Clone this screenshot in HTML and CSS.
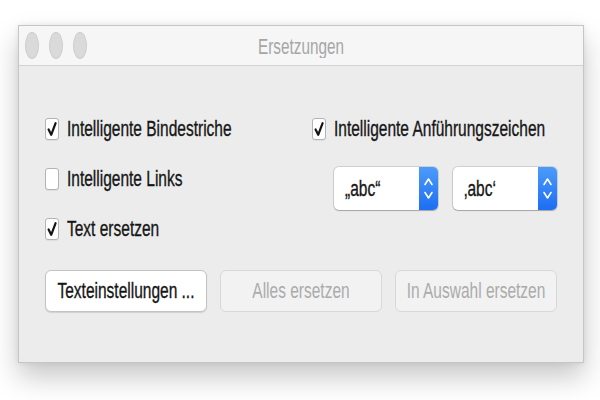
FILE: index.html
```html
<!DOCTYPE html>
<html lang="de">
<head>
<meta charset="utf-8">
<title>Ersetzungen</title>
<link rel="stylesheet" href="styles.css">
</head>
<body>
<div class="stage">
  <div class="window">
    <div class="titlebar">
      <div class="lights">
        <span class="light"></span><span class="light"></span><span class="light"></span>
      </div>
      <div class="title"><span class="tt">Ersetzungen</span></div>
    </div>
    <div class="content">
      <div class="options">
        <div class="col left">
          <label class="check">
            <span class="box"><svg width="14" height="22" viewBox="0 0 14 22"><path d="M3.6 11.5 L6.2 16.8 L10.6 5.2" fill="none" stroke="#151515" stroke-width="2.2" stroke-linecap="round" stroke-linejoin="round"/></svg></span>
            <span class="label">Intelligente Bindestriche</span>
          </label>
          <label class="check">
            <span class="box"></span>
            <span class="label">Intelligente Links</span>
          </label>
          <label class="check">
            <span class="box"><svg width="14" height="22" viewBox="0 0 14 22"><path d="M3.6 11.5 L6.2 16.8 L10.6 5.2" fill="none" stroke="#151515" stroke-width="2.2" stroke-linecap="round" stroke-linejoin="round"/></svg></span>
            <span class="label">Text ersetzen</span>
          </label>
        </div>
        <div class="col right">
          <label class="check">
            <span class="box"><svg width="14" height="22" viewBox="0 0 14 22"><path d="M3.6 11.5 L6.2 16.8 L10.6 5.2" fill="none" stroke="#151515" stroke-width="2.2" stroke-linecap="round" stroke-linejoin="round"/></svg></span>
            <span class="label">Intelligente Anführungszeichen</span>
          </label>
          <div class="popups">
            <div class="popup">
              <span class="value">„abc“</span>
              <span class="stepper"><svg width="19" height="43" viewBox="0 0 19 43"><path d="M6 17.5 L9.5 12 L13 17.5 M6 25.5 L9.5 31 L13 25.5" fill="none" stroke="#fff" stroke-width="1.6" stroke-linecap="round" stroke-linejoin="round"/></svg></span>
            </div>
            <div class="popup">
              <span class="value">‚abc‘</span>
              <span class="stepper"><svg width="19" height="43" viewBox="0 0 19 43"><path d="M6 17.5 L9.5 12 L13 17.5 M6 25.5 L9.5 31 L13 25.5" fill="none" stroke="#fff" stroke-width="1.6" stroke-linecap="round" stroke-linejoin="round"/></svg></span>
            </div>
          </div>
        </div>
      </div>
      <div class="buttons">
        <button class="btn"><span class="bt">Texteinstellungen ...</span></button>
        <button class="btn disabled"><span class="bt">Alles ersetzen</span></button>
        <button class="btn disabled"><span class="bt">In Auswahl ersetzen</span></button>
      </div>
    </div>
  </div>
</div>
</body>
</html>
```

FILE: styles.css
```css
* { box-sizing: border-box; }
html, body {
  margin: 0;
  padding: 0;
  background: #ffffff;
}
body {
  font-family: "Liberation Sans", Arial, sans-serif;
  font-size: 15.5px;
  color: #161616;
  width: 600px;
  height: 400px;
  overflow: hidden;
}
.stage {
  padding: 25px 16px 0 18px;
}
.window {
  width: 566px;
  height: 338px;
  background: #ececec;
  border: 1px solid #c6c6c6;
  box-shadow: 0 14px 26px rgba(0, 0, 0, 0.22), 0 0 6px rgba(0, 0, 0, 0.08);
  display: flex;
  flex-direction: column;
}
.titlebar {
  height: 40px;
  flex: none;
  background: #f6f6f6;
  border-bottom: 1px solid #d2d2d2;
  display: flex;
  align-items: center;
  position: relative;
}
.lights {
  display: flex;
  gap: 10px;
  padding-left: 6px;
}
.light {
  width: 14px;
  height: 27px;
  border-radius: 50%;
  background: #dadada;
  border: 1px solid #cdcdcd;
}
.title {
  position: absolute;
  left: 0;
  right: 0;
  top: 0;
  bottom: 0;
  display: flex;
  align-items: center;
  justify-content: center;
  font-size: 15.3px;
  color: #a6a6a6;
}
.tt, .label, .value, .bt {
  display: inline-block;
  transform: scaleY(1.4);
  white-space: nowrap;
}
.label, .value, .btn:not(.disabled) .bt {
  -webkit-text-stroke: 0.25px #161616;
}
.tt {
  transform: scaleY(1.5);
}
.content {
  padding: 52px 26px 0 26px;
}
.options {
  display: flex;
}
.col {
  display: flex;
  flex-direction: column;
  flex: none;
}
.col.left {
  width: 267px;
  gap: 28px;
}
.col.right {
  gap: 27px;
}
.check {
  display: flex;
  align-items: center;
  gap: 8px;
  height: 22px;
  white-space: nowrap;
}
.box {
  width: 14px;
  height: 22px;
  flex: none;
  background: #ffffff;
  border: 1px solid #b4b4b4;
  border-radius: 3px;
  box-shadow: 0 1px 0 rgba(0, 0, 0, 0.06);
  display: flex;
}
.box svg {
  margin: -1px;
}
.label {
  line-height: 22px;
}
.popups {
  display: flex;
  gap: 15px;
  margin-left: 22px;
}
.popup {
  width: 104px;
  height: 43px;
  background: #ffffff;
  border-radius: 5px;
  box-shadow: 0 0 0 1px rgba(0, 0, 0, 0.12), 0 1px 1px rgba(0, 0, 0, 0.2);
  display: flex;
  align-items: center;
  justify-content: space-between;
  overflow: hidden;
}
.value {
  padding-left: 11px;
}
.stepper {
  width: 19px;
  height: 43px;
  background: linear-gradient(#4c9bfa, #1d6ef2);
  display: flex;
}
.buttons {
  display: flex;
  gap: 13px;
  margin-top: 30px;
}
.btn {
  width: 162px;
  height: 42px;
  font-family: inherit;
  font-size: 15.5px;
  color: #161616;
  background: #ffffff;
  border: 1px solid #c3c3c3;
  border-radius: 6px;
  box-shadow: 0 1px 1px rgba(0, 0, 0, 0.12);
  padding: 0;
}
.btn.disabled {
  background: #f2f2f2;
  border-color: #d8d8d8;
  color: #ababab;
  box-shadow: none;
}
```
